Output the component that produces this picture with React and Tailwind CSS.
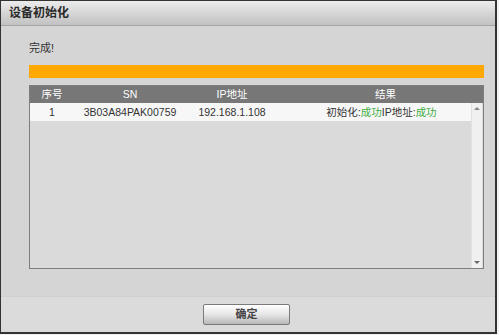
import React from 'react';

const font = { fontFamily: '"Liberation Sans", "Noto Sans CJK SC", Arial, sans-serif' };

const rows = [
  { no: '1', sn: '3B03A84PAK00759', ip: '192.168.1.108' },
];

function App() {
  return (
    <div className="w-[499px] h-[335px] bg-[#f2f2f2]" style={font}>
      <div className="w-[497px] h-[334px] border border-[#333] border-r-2 border-b-2 flex flex-col bg-[#d5d5d5]">
        {/* title bar */}
        <div className="h-[25px] shrink-0 flex items-center pl-[8px] bg-gradient-to-b from-[#ececec] via-[#d6d6d6] to-[#c2c2c2] border-b border-[#a4a4a4]">
          <span className="text-[12px] font-bold text-[#2a2a2a]">设备初始化</span>
        </div>

        {/* body */}
        <div className="flex-1 flex flex-col pl-[28px] pr-[11px]">
          <div className="mt-[15px] h-[14px] text-[11px] leading-[14px] text-[#333]">完成!</div>
          <div className="mt-[10px] h-[13px] bg-[#fea803]" />

          <div className="mt-[7px] h-[184px] border border-[#7e7e7e] bg-[#dadada] flex flex-col">
            <div className="h-[17px] shrink-0 flex bg-[#777] text-white text-[10.5px] leading-[17px]">
              <div className="w-[44px] text-center">序号</div>
              <div className="w-[112px] text-center">SN</div>
              <div className="w-[92px] text-center">IP地址</div>
              <div className="flex-1 text-center pl-[10px]">结果</div>
            </div>
            <div className="flex-1 flex">
              <div className="flex-1">
                {rows.map((r) => (
                  <div key={r.no} className="h-[18px] flex bg-[#f7f7f7] text-[10.5px] leading-[18px] text-[#333]">
                    <div className="w-[44px] text-center">{r.no}</div>
                    <div className="w-[112px] text-center">{r.sn}</div>
                    <div className="w-[92px] text-center">{r.ip}</div>
                    <div className="flex-1 text-center pl-[14px]">
                      初始化:<span className="text-[#3fae3f]">成功</span>IP地址:<span className="text-[#3fae3f]">成功</span>
                    </div>
                  </div>
                ))}
              </div>
              {/* scrollbar */}
              <div className="w-[11px] mr-[1px] flex flex-col justify-between items-center bg-[#f0f0f0] border-l border-[#e2e2e2] py-[4px]">
                <div className="w-0 h-0 border-l-[3px] border-r-[3px] border-b-[3px] border-l-transparent border-r-transparent border-b-[#888]" />
                <div className="w-0 h-0 border-l-[3px] border-r-[3px] border-t-[3px] border-l-transparent border-r-transparent border-t-[#666]" />
              </div>
            </div>
          </div>
        </div>

        {/* footer */}
        <div className="h-[36px] shrink-0 flex items-center justify-center bg-[#dbdbdb] border-t border-[#cfcfcf]">
          <button className="w-[87px] h-[21px] rounded-[2px] border border-[#7a7a7a] bg-gradient-to-b from-[#ffffff] via-[#e6e6e6] to-[#b8b8b8] text-[11px] font-bold text-[#444] ml-[-3px]">
            确定
          </button>
        </div>
      </div>
    </div>
  );
}

export default App;
